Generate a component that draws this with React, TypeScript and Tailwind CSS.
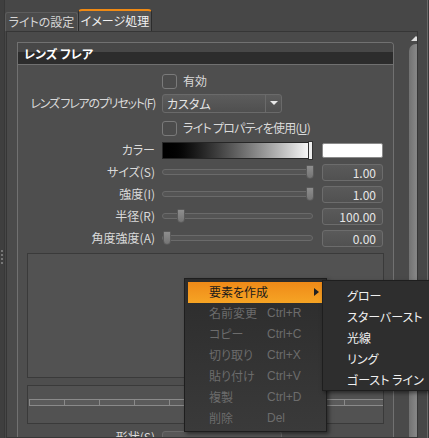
import React from 'react'

// Lens flare settings panel with open context menu

const FONT = 'font-["Noto_Sans_CJK_JP","Noto_Sans",sans-serif] [font-feature-settings:"palt"]'

function Checkbox() {
    return <div className="w-[15px] h-[15px] rounded-[3px] border border-[#7a7a7a] bg-[#4c4c4c] shrink-0" />
}

function ValueBox({ value }: { value: string }) {
    return (
        <div className="w-[61px] h-[17px] rounded-[3px] border border-[#6c6c6c] bg-gradient-to-b from-[#5a5a5a] to-[#515151] text-right pr-[6px] text-[12px] leading-[15px] text-[#e6e6e6]">
            {value}
        </div>
    )
}

function Slider({ pos }: { pos: number }) {
    return (
        <div className="relative w-[151px] h-[14px] flex items-center">
            <div className="w-full h-[6px] rounded-full border border-[#6a6a6a] bg-[#545454]" />
            <div
                className="absolute top-0 w-[8px] h-[14px] rounded-b-[4px] rounded-t-[1px] bg-gradient-to-b from-[#8e8e8e] to-[#747474] border border-[#5a5a5a]"
                style={{ left: pos }}
            />
        </div>
    )
}

function Row({ label, children, value, trailing, className = '', labelClass = '' }: {
    label?: string; children?: React.ReactNode; value?: string; trailing?: React.ReactNode; className?: string; labelClass?: string
}) {
    return (
        <div className={`flex items-center h-[22px] ${className}`}>
            <div className={`w-[137px] shrink-0 text-right text-[12px] text-[#dadada] whitespace-nowrap ${labelClass}`}>{label}</div>
            <div className="w-[151px] ml-[7px] shrink-0 flex items-center">{children}</div>
            {value && <div className="ml-[9px]"><ValueBox value={value} /></div>}
            {trailing && <div className="ml-[9px]">{trailing}</div>}
        </div>
    )
}

const MENU_ITEMS = [
    { label: '名前変更', key: 'Ctrl+R' },
    { label: 'コピー', key: 'Ctrl+C' },
    { label: '切り取り', key: 'Ctrl+X' },
    { label: '貼り付け', key: 'Ctrl+V' },
    { label: '複製', key: 'Ctrl+D' },
    { label: '削除', key: 'Del' },
]

const SUB_ITEMS = ['グロー', 'スターバースト', '光線', 'リング', 'ゴースト ライン']

export default function App() {
    return (
        <div className={`relative w-[429px] h-[438px] overflow-hidden bg-[#474747] flex ${FONT}`}>
            {/* left edge */}
            <div className="w-[5px] shrink-0 bg-[#3f3f3f] border-r border-[#383838] flex flex-col items-center pt-[250px] gap-[2px]">
                <div className="w-[2px] h-[2px] bg-[#777]" />
                <div className="w-[2px] h-[2px] bg-[#777]" />
                <div className="w-[2px] h-[2px] bg-[#777]" />
                <div className="w-[2px] h-[2px] bg-[#777]" />
            </div>

            <div className="w-[413px] shrink-0 flex flex-col">
                {/* tabs */}
                <div className="h-[31px] flex items-end">
                    <div className="h-[19px] w-[73px] rounded-t-[3px] border border-b-0 border-[#5d5d5d] bg-[#4b4b4b] text-[12px] text-[#d6d6d6] flex items-center justify-center">
                        ライトの設定
                    </div>
                    <div className="h-[22px] w-[74px] rounded-t-[4px] border border-b-0 border-[#2c2c2c] border-t-2 border-t-[#f08a14] bg-[#545454] text-[12px] text-[#f2f2f2] flex items-center justify-center">
                        イメージ処理
                    </div>
                </div>

                {/* panel */}
                <div className="flex-1 ml-[1px] border border-[#363636] bg-[#4a4a4a] flex overflow-hidden">
                    <div className="pl-[10px] pt-[10px] w-[396px] shrink-0">
                        <div className="w-[377px] rounded-tr-[4px] border border-b-0 border-[#717171] bg-[#4e4e4e]">
                            <div className="h-[22px] rounded-tr-[3px] border-b border-[#707070] bg-gradient-to-b from-[#474747] via-[#474747] via-45% to-[#2c2c2c] to-45% flex items-center pl-[6px] text-[12px] font-bold text-white">
                                レンズ フレア
                            </div>

                            <div className="pt-[5px]">
                                <Row>
                                    <Checkbox />
                                    <span className="ml-[6px] text-[12px] text-[#dadada]">有効</span>
                                </Row>
                                <Row label="レンズ フレアのプリセット(F)" labelClass="tracking-[-1.2px]">
                                    <div className="w-[120px] h-[19px] rounded-[3px] border border-[#6a6a6a] bg-gradient-to-b from-[#5c5c5c] to-[#4f4f4f] flex">
                                        <div className="flex-1 pl-[4px] text-[12px] leading-[17px] text-[#e6e6e6]">カスタム</div>
                                        <div className="w-[16px] border-l border-[#6a6a6a] flex items-center justify-center">
                                            <div className="w-0 h-0 border-l-[4px] border-r-[4px] border-t-[4px] border-l-transparent border-r-transparent border-t-[#e8e8e8]" />
                                        </div>
                                    </div>
                                </Row>
                                <Row className="mt-[3px]">
                                    <Checkbox />
                                    <span className="ml-[6px] text-[12px] text-[#dadada] whitespace-nowrap tracking-[-0.75px]">ライト プロパティを使用(<u>U</u>)</span>
                                </Row>
                                <Row
                                    label="カラー"
                                    trailing={<div className="w-[61px] h-[15px] rounded-[2px] border border-[#8a8a8a] bg-white" />}
                                >
                                    <div className="relative w-[151px] h-[17px] border border-[#262626] bg-gradient-to-r from-black to-white">
                                        <div className="absolute right-[-1px] top-[-2px] w-[5px] h-[19px] border border-[#333] bg-[#eee]" />
                                    </div>
                                </Row>
                                <Row label="サイズ(S)" value="1.00"><Slider pos={144} /></Row>
                                <Row label="強度(I)" value="1.00"><Slider pos={144} /></Row>
                                <Row label="半径(R)" value="100.00"><Slider pos={15} /></Row>
                                <Row label="角度強度(A)" value="0.00"><Slider pos={1} /></Row>

                                <div className="ml-[9px] mt-[4px] w-[357px] h-[125px] border border-[#3a3a3a] bg-[#525252]" />
                                <div className="ml-[9px] mt-[7px] w-[357px] h-[39px] border border-[#3a3a3a] bg-[#525252] pt-[13px] pl-[1px]">
                                    <div className="h-[7px] flex border-y border-[#8a8a8a] bg-[#5b5b5b]">
                                        {Array.from({ length: 10 }).map((_, i) => (
                                            <div key={i} className="w-[35px] shrink-0 border-l border-[#8a8a8a]" />
                                        ))}
                                    </div>
                                </div>
                                <Row label="形状(S)" className="mt-[2px]">
                                    <div className="w-[120px] h-[19px] mt-[6px] rounded-[3px] border border-[#6a6a6a] bg-[#575757]" />
                                </Row>
                            </div>
                        </div>
                    </div>

                    {/* scrollbar */}
                    <div className="w-[14px] shrink-0 ml-[6px] flex flex-col">
                        <div className="h-[12px] flex items-center justify-center">
                            <div className="w-0 h-0 border-l-[5px] border-r-[5px] border-b-[5px] border-l-transparent border-r-transparent border-b-[#e0e0e0]" />
                        </div>
                        <div className="flex-1 rounded-t-full bg-gradient-to-r from-[#727272] via-[#868686] to-[#767676]" />
                    </div>
                </div>
            </div>

            {/* right edge */}
            <div className="flex-1 flex justify-end">
                <div className="w-[1px] bg-[#6a6a6a]" />
                <div className="w-[1px] bg-[#3a3a3a]" />
            </div>

            {/* context menu */}
            <div className="absolute left-[184px] top-[278px] w-[143px] h-[154px] border border-[#1e1e1e] bg-gradient-to-b from-[#2c2c2c] to-[#3a3a3a] shadow-[2px_2px_4px_rgba(0,0,0,0.5)] p-[3px] flex flex-col text-[12px]">
                <div className="h-[21px] flex items-center bg-gradient-to-b from-[#ef8a18] to-[#f6a424] text-[#1a1a1a]">
                    <span className="ml-[21px] flex-1">要素を作成</span>
                    <div className="mr-[4px] w-0 h-0 border-t-[4px] border-b-[4px] border-l-[5px] border-t-transparent border-b-transparent border-l-[#222]" />
                </div>
                {MENU_ITEMS.map(it => (
                    <div key={it.label} className="h-[21.3px] flex items-center text-[#6c6c6c]">
                        <span className="ml-[21px] w-[58px]">{it.label}</span>
                        <span className="font-['Liberation_Sans',sans-serif]">{it.key}</span>
                    </div>
                ))}
            </div>

            {/* submenu */}
            <div className="absolute left-[322px] top-[280px] w-[120px] h-[111px] border border-[#1e1e1e] bg-[#2e2e2e] shadow-[2px_2px_4px_rgba(0,0,0,0.5)] pt-[4px] flex flex-col text-[12px] text-[#f0f0f0]">
                {SUB_ITEMS.map(s => (
                    <div key={s} className="h-[21px] flex items-center pl-[24px] whitespace-nowrap">{s}</div>
                ))}
            </div>
        </div>
    )
}
